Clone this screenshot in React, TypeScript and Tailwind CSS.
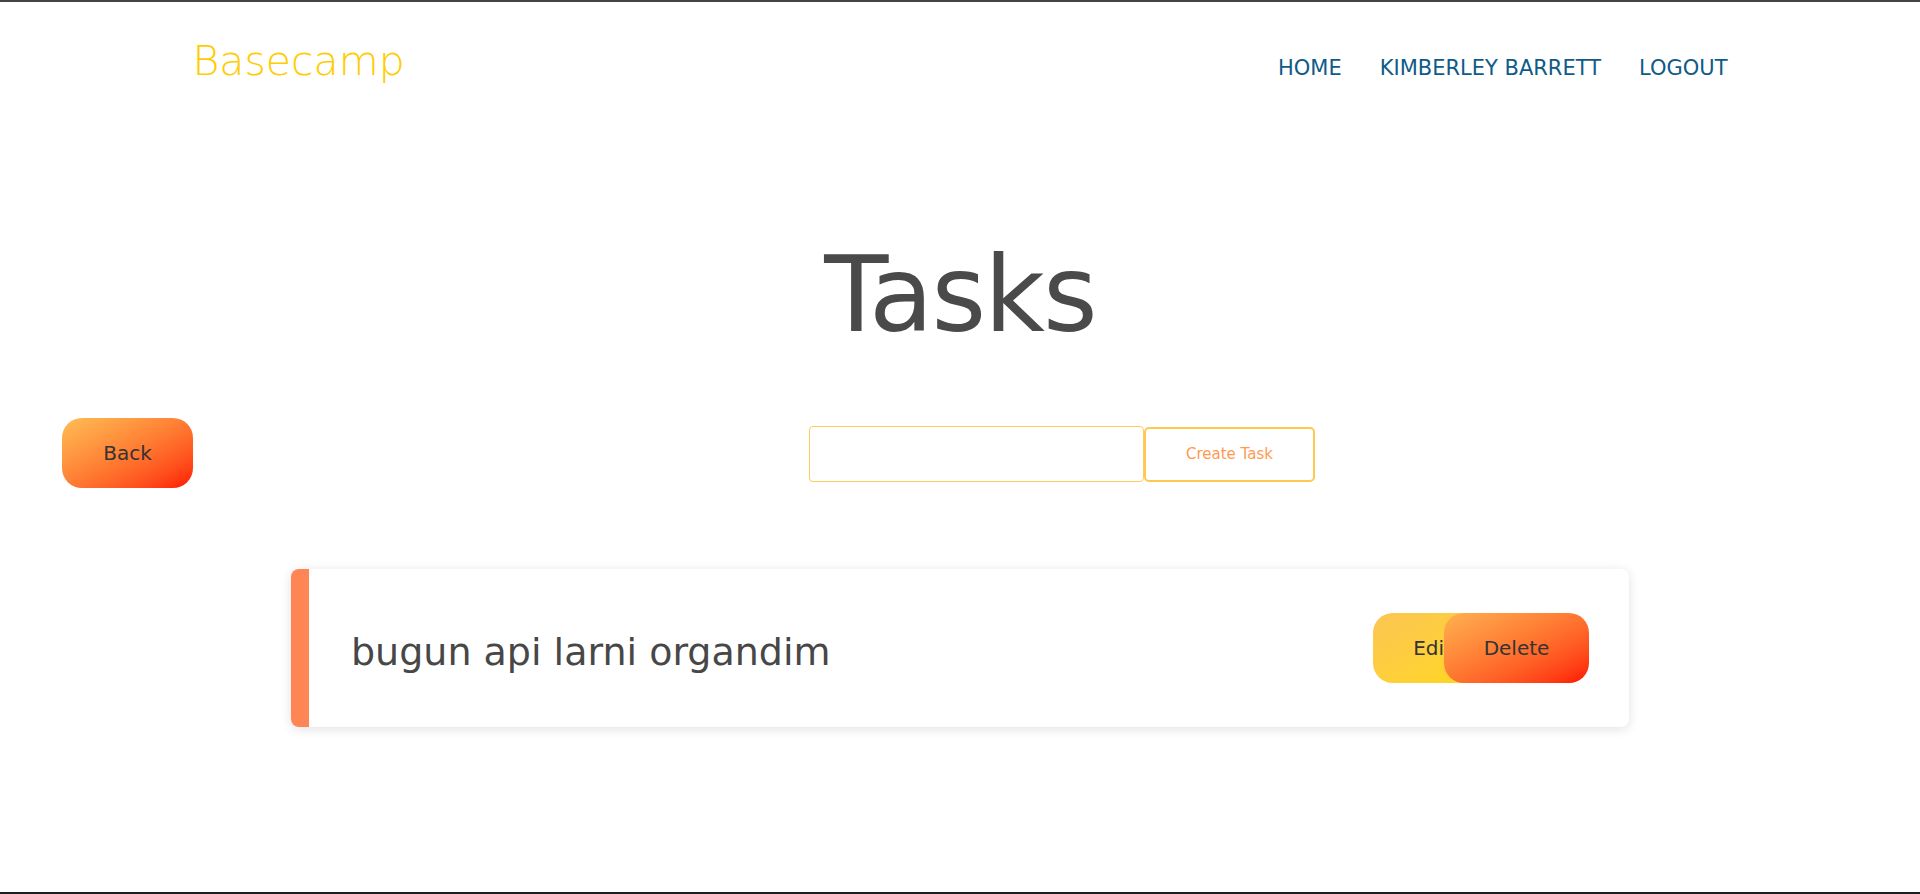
import React from "react";

const font = { fontFamily: '"DejaVu Sans", "Noto Sans", sans-serif' };

const NavLink = ({ children }: { children: React.ReactNode }) => (
  <a href="#" className="text-[21px] leading-none text-[#0f5b86] uppercase">
    {children}
  </a>
);

const App = () => {
  return (
    <div
      style={font}
      className="h-[894px] bg-white border-t-2 border-[#444444] border-b-2 border-b-[#1e1e1e] overflow-hidden"
    >
      <header className="w-[1535px] mx-auto pt-[39px] flex items-baseline justify-between">
        <a href="#" className="text-[41px] leading-none font-light text-[#ffcc00]">
          Basecamp
        </a>
        <nav className="flex items-baseline gap-[38px]">
          <NavLink>Home</NavLink>
          <NavLink>Kimberley Barrett</NavLink>
          <NavLink>Logout</NavLink>
        </nav>
      </header>

      <h1 className="mt-[161px] text-center text-[105px] leading-none tracking-[-2px] text-[#4a4a4a]">
        Tasks
      </h1>

      <div className="mt-[70px] pl-[62px] flex items-start">
        <button className="w-[131px] h-[70px] rounded-[20px] bg-linear-to-br from-[#ffbd55] to-[#ff0500] text-[20px] text-[#333333]">
          Back
        </button>
        <form className="ml-[616px] mt-[8px] flex items-center">
          <input
            type="text"
            className="w-[335px] h-[56px] rounded-[4px] border border-[#ffcb5c] outline-none px-3"
          />
          <button
            type="button"
            className="w-[171px] h-[55px] rounded-[5px] border-2 border-[#ffc850] bg-white text-[15px] text-[#ff9a52]"
          >
            Create Task
          </button>
        </form>
      </div>

      <div className="mt-[81px] mx-auto w-[1338px] h-[158px] rounded-[8px] overflow-hidden bg-white shadow-[0_2px_12px_rgba(0,0,0,0.12)] flex">
        <div className="w-[18px] bg-[#ff8555]" />
        <div className="flex-1 flex items-center justify-between pl-[42px] pr-[40px]">
          <p className="pt-[8px] text-[38px] text-[#474747]">bugun api larni organdim</p>
          <div className="flex items-center">
            <button className="w-[119px] h-[70px] rounded-[20px] bg-linear-to-br from-[#fcc552] to-[#ffd80a] text-[20px] text-[#333333]">
              Edit
            </button>
            <button className="-ml-[48px] w-[145px] h-[70px] rounded-[20px] bg-linear-to-br from-[#ffb050] to-[#ff0300] text-[20px] text-[#333333]">
              Delete
            </button>
          </div>
        </div>
      </div>
    </div>
  );
};

export default App;
